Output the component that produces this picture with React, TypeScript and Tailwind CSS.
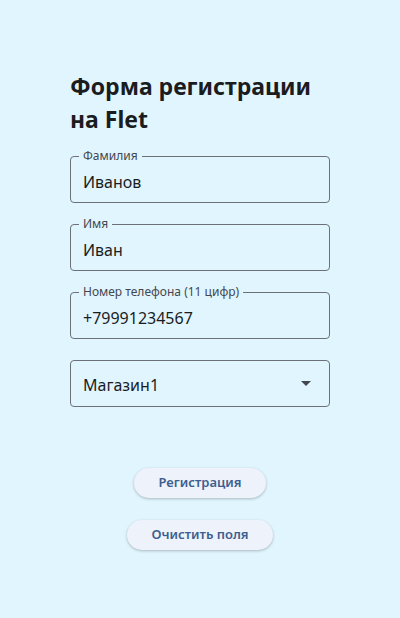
import React from "react";

function Field({ label, value }: { label: string; value: string }) {
  return (
    <div className="relative h-[47px] rounded-[4px] border border-[#6b7176] flex items-center px-[12px]">
      <span className="absolute left-[8px] top-[-9px] px-[4px] bg-[#e1f5fe] text-[12px] leading-[16px] text-[#44474e]">
        {label}
      </span>
      <span className="text-[16px] text-[#1a1c1e] pt-[4px]">{value}</span>
    </div>
  );
}

export default function App() {
  return (
    <div
      className="w-[400px] h-[618px] bg-[#e1f5fe] flex flex-col px-[70px] pt-[70px]"
      style={{ fontFamily: '"Noto Sans", "Open Sans", sans-serif' }}
    >
      <h1 className="text-[23px] font-bold leading-[33px] text-[#1a1c1e]">
        Форма регистрации на Flet
      </h1>
      <div className="mt-[20px] flex flex-col gap-[21px]">
        <Field label="Фамилия" value="Иванов" />
        <Field label="Имя" value="Иван" />
        <Field label="Номер телефона (11 цифр)" value="+79991234567" />
        <div className="h-[47px] rounded-[4px] border border-[#6b7176] flex items-center justify-between pl-[12px] pr-[18px]">
          <span className="text-[16px] text-[#1a1c1e] pt-[2px]">Магазин1</span>
          <svg width="10" height="5" viewBox="0 0 10 5">
            <path d="M0 0 L10 0 L5 5 Z" fill="#44474e" />
          </svg>
        </div>
      </div>
      <div className="mt-[61px] flex flex-col items-center gap-[22px]">
        <button className="h-[30px] px-[24px] rounded-full bg-[#eef2fb] text-[13px] font-semibold text-[#3d5f8f] shadow-[0_1px_3px_rgba(0,0,0,0.25)]">
          Регистрация
        </button>
        <button className="h-[30px] px-[24px] rounded-full bg-[#eef2fb] text-[13px] font-semibold text-[#3d5f8f] shadow-[0_1px_3px_rgba(0,0,0,0.25)]">
          Очистить поля
        </button>
      </div>
    </div>
  );
}
